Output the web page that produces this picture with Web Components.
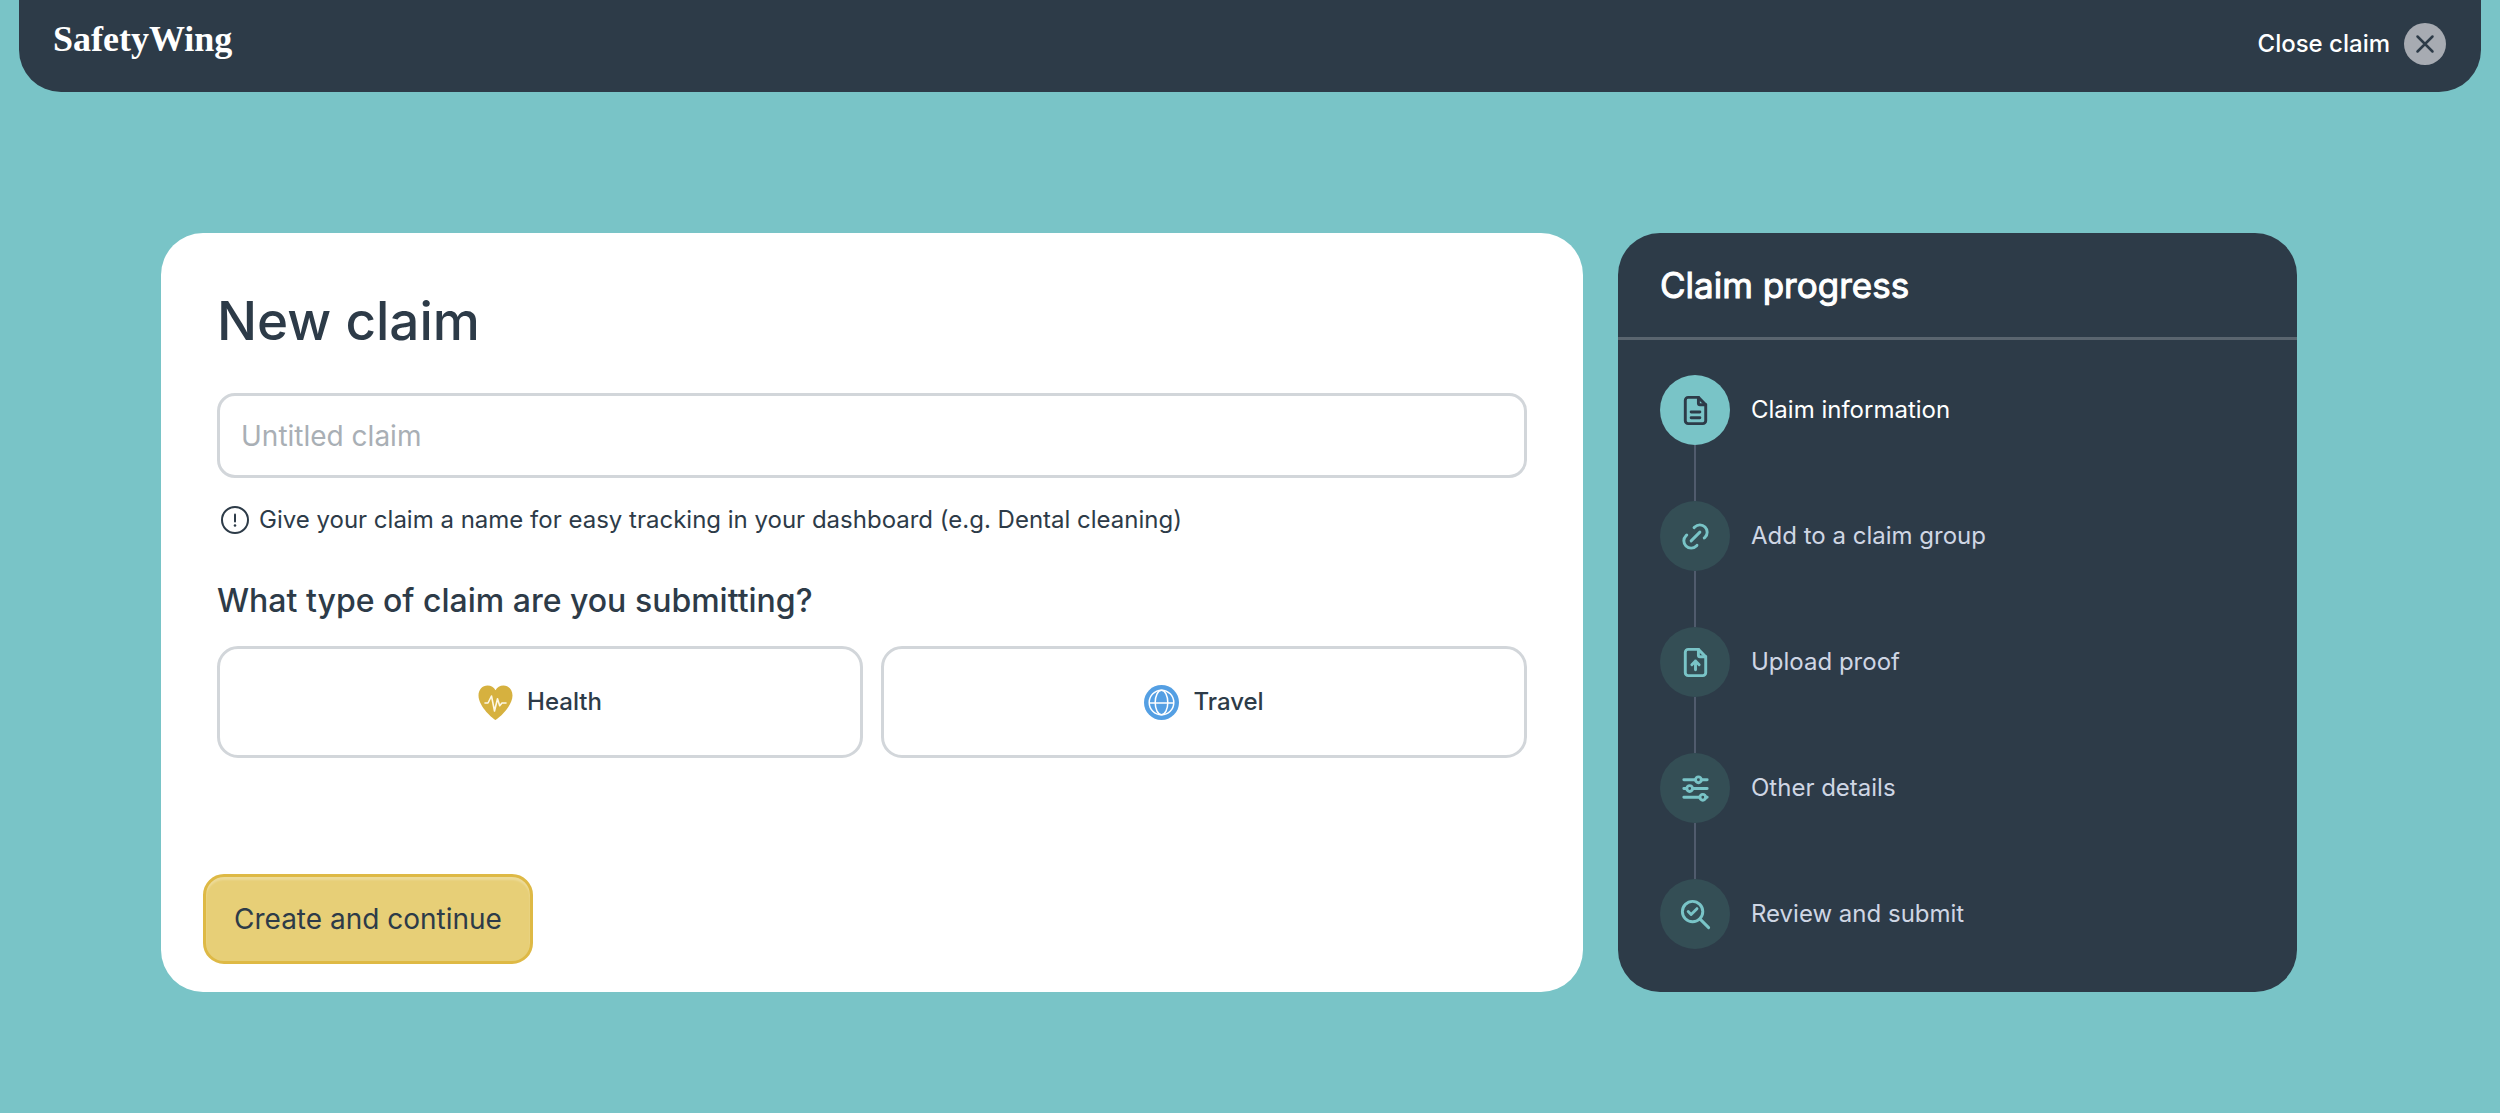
<!DOCTYPE html>
<html lang="en">
<head>
<meta charset="utf-8">
<meta name="viewport" content="width=device-width, initial-scale=1">
<title>SafetyWing</title>
<style>
  :root {
    --teal: #79c4c7;
    --navy: #2d3b48;
    --line: #d2d6da;
    --muted: #a9afb5;
  }
  body {
    margin: 0;
    min-height: 100vh;
    background: var(--teal);
    color: var(--navy);
    font-family: Inter, "Liberation Sans", sans-serif;
    font-size: 24px;
    line-height: 32px;
  }
  main {
    display: grid;
    grid-template-columns: 1422fr 679fr;
    gap: 35px;
    padding: 141px 203px 121px 161px;
  }
</style>
</head>
<body>
<claim-header>Close claim</claim-header>
<main>
  <claim-form>
    <claim-type icon="health">Health</claim-type>
    <claim-type icon="travel">Travel</claim-type>
  </claim-form>
  <claim-progress>
    <progress-step icon="file" active>Claim information</progress-step>
    <progress-step icon="link">Add to a claim group</progress-step>
    <progress-step icon="upload">Upload proof</progress-step>
    <progress-step icon="sliders">Other details</progress-step>
    <progress-step icon="review">Review and submit</progress-step>
  </claim-progress>
</main>

<script>
const FILE_OUTLINE = `
  <path d="M14 3v4a1 1 0 0 0 1 1h4"/>
  <path d="M17 21H7a2 2 0 0 1-2-2V5a2 2 0 0 1 2-2h7l5 5v11a2 2 0 0 1-2 2z"/>`;

const STEP_ICONS = {
  file: `${FILE_OUTLINE}<path d="M9 13h6M9 17h6"/>`,
  link: `
    <path d="M9 15l6-6"/>
    <path d="M11 6l.463-.536a5 5 0 0 1 7.071 7.072L18 13"/>
    <path d="M13 18l-.397.534a5.068 5.068 0 0 1-7.127 0 4.972 4.972 0 0 1 0-7.071L6 11"/>`,
  upload: `${FILE_OUTLINE}<path d="M12 11v6M9.500 13.500l2.500-2.500 2.500 2.500"/>`,
  sliders: `
    <circle cx="14" cy="6" r="2"/><path d="M4 6h8M16 6h4"/>
    <circle cx="8" cy="12" r="2"/><path d="M4 12h2M10 12h10"/>
    <circle cx="17" cy="18" r="2"/><path d="M4 18h11M19 18h1"/>`,
  review: `
    <circle cx="10" cy="10" r="7"/>
    <path d="M21 21l-6-6M7 10l2 2 4-4"/>`
};

const TYPE_ICONS = {
  health: `
    <path fill="#d6b13f" d="M17.500 35C16 34.500 0.500 22 0.500 10.500 0.500 4.500 4.500 0.500 9.500 0.500c3.500 0 6.500 1.800 8 4.800 1.500-3 4.500-4.800 8-4.800 5 0 9 4 9 10C34.500 22 19 34.500 17.500 35z"/>
    <path fill="none" stroke="#fdf8e6" stroke-width="1.600" stroke-linecap="round" stroke-linejoin="round" d="M7 18h3l3.500-7 3 15 3-12.300 2.200 7 2.300-2.700h4"/>`,
  travel: `
    <circle cx="17.500" cy="17.500" r="17.500" fill="#549fe3"/>
    <g fill="none" stroke="#fff" stroke-width="1.500">
      <circle cx="17.500" cy="17.500" r="12.300"/>
      <ellipse cx="17.500" cy="17.500" rx="6.300" ry="12.300"/>
      <path d="M5.200 18h24.600"/>
    </g>`
};

class ClaimHeader extends HTMLElement {
  constructor() {
    super();
    this.attachShadow({ mode: 'open' });
  }

  connectedCallback() {
    this.shadowRoot.innerHTML = `
      <style>
        :host { display: block; padding: 0 19px; }
        header {
          display: flex;
          align-items: flex-start;
          justify-content: space-between;
          box-sizing: border-box;
          min-height: 92px;
          padding: 19px 35px 0 34px;
          border-radius: 0 0 42px 42px;
          background: var(--navy);
          color: #fff;
        }
        .logo {
          color: inherit;
          font: bold 36px/40px "Liberation Serif", serif;
          text-decoration: none;
        }
        button {
          display: flex;
          align-items: center;
          gap: 14px;
          padding: 4px 0;
          border: 0;
          background: none;
          color: inherit;
          font: inherit;
          font-weight: 500;
          cursor: pointer;
        }
      </style>
      <header>
        <a class="logo" href="#">SafetyWing</a>
        <button type="button">
          <slot></slot>
          <svg width="42" height="42" viewBox="0 0 42 42" aria-hidden="true">
            <circle cx="21" cy="21" r="21" fill="#a7abb2"/>
            <path d="M13.500 13.500l15 15M28.500 13.500l-15 15" stroke="#2d3b48" stroke-width="2.500" stroke-linecap="round"/>
          </svg>
        </button>
      </header>
    `;
  }
}

class ClaimForm extends HTMLElement {
  constructor() {
    super();
    this.attachShadow({ mode: 'open' });
  }

  connectedCallback() {
    this.shadowRoot.innerHTML = `
      <style>
        :host {
          display: flex;
          border-radius: 42px;
          background: #fff;
        }
        form {
          flex: 1;
          display: flex;
          flex-direction: column;
          padding: 56px 56px 28px;
        }
        h1 {
          margin: 0 0 40px;
          font-size: 53px;
          font-weight: 500;
          line-height: 64px;
        }
        h2 {
          margin: 0 0 25px;
          font-size: 32px;
          font-weight: 500;
          line-height: 40px;
        }
        input {
          box-sizing: border-box;
          width: 100%;
          height: 85px;
          padding: 0 21px;
          border: 3px solid var(--line);
          border-radius: 18px;
          background: #fff;
          color: inherit;
          font: inherit;
          font-size: 28px;
        }
        input::placeholder { color: var(--muted); opacity: 1; }
        .hint {
          display: flex;
          align-items: center;
          gap: 10px;
          margin: 26px 0 45px;
          padding-left: 4px;
        }
        .types {
          display: grid;
          grid-template-columns: 1fr 1fr;
          gap: 18px;
        }
        .submit {
          align-self: flex-start;
          box-sizing: border-box;
          height: 90px;
          margin: auto 0 0 -14px;
          padding: 0 28px;
          border: 3px solid #deb945;
          border-radius: 21px;
          background: #e7cf77;
          box-shadow: inset 0 3px 2px rgba(255, 255, 255, 0.25);
          color: inherit;
          font: inherit;
          font-size: 28px;
          cursor: pointer;
        }
      </style>
      <form>
        <h1><label for="name">New claim</label></h1>
        <input id="name" type="text" placeholder="Untitled claim" aria-describedby="hint">
        <p class="hint" id="hint">
          <svg width="28" height="28" viewBox="0 0 28 28" fill="none" stroke="currentColor" stroke-width="2" aria-hidden="true">
            <circle cx="14" cy="14" r="13"/>
            <path d="M14 8.500v7" stroke-linecap="round"/>
            <circle cx="14" cy="19.500" r="1.300" fill="currentColor" stroke="none"/>
          </svg>
          <span>Give your claim a name for easy tracking in your dashboard (e.g. Dental cleaning)</span>
        </p>
        <h2>What type of claim are you submitting?</h2>
        <div class="types"><slot></slot></div>
        <button class="submit" type="submit">Create and continue</button>
      </form>
    `;
  }
}

class ClaimType extends HTMLElement {
  constructor() {
    super();
    this.attachShadow({ mode: 'open' });
  }

  connectedCallback() {
    this.shadowRoot.innerHTML = `
      <style>
        :host { display: block; }
        button {
          display: flex;
          align-items: center;
          justify-content: center;
          gap: 14px;
          box-sizing: border-box;
          width: 100%;
          height: 112px;
          border: 3px solid var(--line);
          border-radius: 21px;
          background: #fff;
          color: inherit;
          font: inherit;
          font-weight: 500;
          cursor: pointer;
        }
      </style>
      <button type="button">
        <svg width="35" height="35" viewBox="0 0 35 35" aria-hidden="true">${TYPE_ICONS[this.getAttribute('icon')]}</svg>
        <slot></slot>
      </button>
    `;
  }
}

class ClaimProgress extends HTMLElement {
  constructor() {
    super();
    this.attachShadow({ mode: 'open' });
  }

  connectedCallback() {
    this.shadowRoot.innerHTML = `
      <style>
        :host {
          display: block;
          border-radius: 42px;
          background: var(--navy);
          color: #fff;
        }
        h2 {
          margin: 0;
          padding: 32px 42px;
          border-bottom: 3px solid #5a656f;
          font-size: 35px;
          font-weight: 400;
          line-height: 40px;
          -webkit-text-stroke: 1px currentColor;
        }
        .steps {
          display: flex;
          flex-direction: column;
          padding: 35px 42px 43px;
        }
      </style>
      <h2>Claim progress</h2>
      <div class="steps" role="list"><slot></slot></div>
    `;
  }
}

class ProgressStep extends HTMLElement {
  constructor() {
    super();
    this.attachShadow({ mode: 'open' });
  }

  connectedCallback() {
    this.setAttribute('role', 'listitem');
    this.shadowRoot.innerHTML = `
      <style>
        :host { display: block; color: #cfd6e4; }
        :host([active]) { color: #fff; }
        .row {
          display: flex;
          align-items: center;
          gap: 21px;
        }
        .dot {
          display: flex;
          align-items: center;
          justify-content: center;
          width: 70px;
          height: 70px;
          border-radius: 50%;
          background: #344e55;
          color: var(--teal);
        }
        :host([active]) .dot { background: var(--teal); color: var(--navy); }
        /* line down to the next step */
        .line {
          width: 2px;
          height: 56px;
          margin-left: 34px;
          background: #505b6d;
        }
        :host(:last-of-type) .line { display: none; }
      </style>
      <div class="row">
        <span class="dot">
          <svg width="35" height="35" viewBox="0 0 24 24" fill="none" stroke="currentColor" stroke-width="2" stroke-linecap="round" stroke-linejoin="round" aria-hidden="true">${STEP_ICONS[this.getAttribute('icon')]}</svg>
        </span>
        <slot></slot>
      </div>
      <div class="line"></div>
    `;
  }
}

customElements.define('claim-header', ClaimHeader);
customElements.define('claim-form', ClaimForm);
customElements.define('claim-type', ClaimType);
customElements.define('claim-progress', ClaimProgress);
customElements.define('progress-step', ProgressStep);
</script>
</body>
</html>
